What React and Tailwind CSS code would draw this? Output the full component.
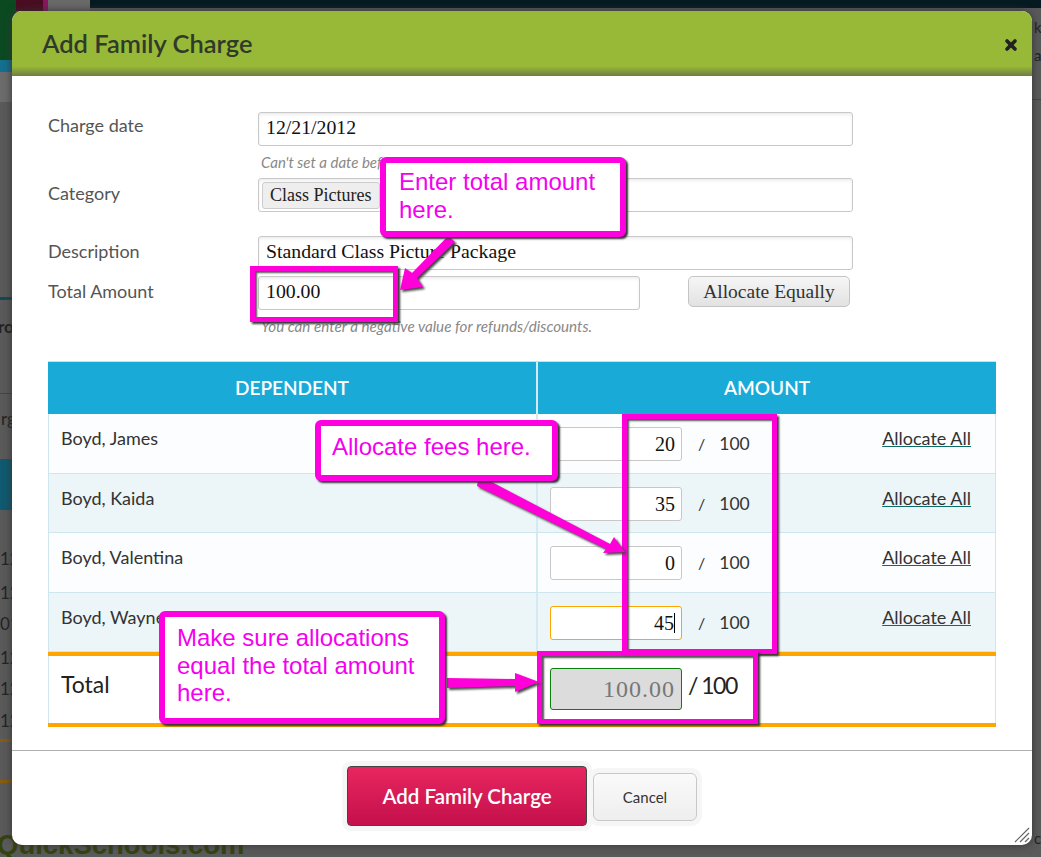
import { X } from 'lucide-react';

const ROWS = [
  { name: 'Boyd, James', value: '20', bg: 'bg-[#fbfdff]', h: 'h-[60px]' },
  { name: 'Boyd, Kaida', value: '35', bg: 'bg-[#ecf5f8]', h: 'h-[59px]' },
  { name: 'Boyd, Valentina', value: '0', bg: 'bg-[#fbfdff]', h: 'h-[60px]' },
  { name: 'Boyd, Wayne', value: '45', bg: 'bg-[#ecf5f8]', h: 'h-[59px]', focused: true },
];

const BG_NUMBERS = [
  { text: '12', top: 'top-[546px]' },
  { text: '12', top: 'top-[580px]' },
  { text: '01', top: 'top-[611px]' },
  { text: '12', top: 'top-[645px]' },
  { text: '12', top: 'top-[676px]' },
  { text: '12', top: 'top-[708px]' },
];

const sans = "font-['Lato','Open_Sans',sans-serif]";
const serif = "font-['Liberation_Serif',serif]";
const callout = "absolute border-[6px] border-[#ff00e0] rounded-[6px] bg-white shadow-[2px_2px_2px_#333] font-['Liberation_Sans',sans-serif] text-[#f500ee] text-[24px] leading-[27.5px]";
const box = 'absolute border-[5px] border-[#ff00d8] shadow-[2px_2px_2px_#333,inset_2px_2px_2px_#555]';

function Field({ children, className = '' }) {
  return (
    <div className={`h-[34px] border border-[#c8c8c8] rounded-[3px] bg-white shadow-[inset_0_2px_3px_#eee] flex items-center px-[7px] pb-[3px] text-[19.8px] text-[#111] ${serif} ${className}`}>
      {children}
    </div>
  );
}

function Label({ children }) {
  return <div className={`w-[210px] text-[18px] text-[#555] ${sans}`}>{children}</div>;
}

function BackdropPage() {
  return (
    <>
      <div className="absolute left-0 top-0 w-[16px] h-[60px] bg-[#0b4a20]" />
      <div className="absolute left-[16px] top-0 w-[27px] h-[11px] bg-[#4a0c20]" />
      <div className="absolute left-[43px] top-0 w-[5px] h-[11px] bg-[#8c1560]" />
      <div className="absolute left-[48px] top-0 w-[42px] h-[11px] bg-[#6a6a6a]" />
      <div className="absolute left-[90px] top-0 w-[951px] h-[8px] bg-[#061a22]" />
      <div className="absolute left-0 top-[60px] w-[12px] h-[12px] bg-[#13708f]" />
      <div className="absolute left-0 top-[72px] w-[12px] h-[30px] bg-[#6c6c6c]" />
      <div className="absolute left-0 top-[297px] w-[12px] h-[3px] bg-[#0f4a58]" />
      <div className="absolute left-0 top-[393px] w-[12px] h-px bg-[#444]" />
      <div className="absolute left-0 top-[459px] w-[12px] h-[51px] bg-[#0f5a70]" />
      <div className="absolute left-0 top-[739px] w-[12px] h-[3px] bg-[#8a5c10]" />
      <div className="absolute left-0 top-[780px] w-[12px] h-[3px] bg-[#8a5c10]" />
      <div className="absolute left-[1032px] top-[99px] w-[9px] h-px bg-[#444]" />
      <div className={`absolute left-[-2px] top-[314px] text-[17px] font-bold text-[#222] ${sans}`}>ro</div>
      <div className={`absolute left-[1px] top-[406px] text-[17px] text-[#222] ${sans}`}>rg</div>
      <div className={`absolute left-[1034px] top-[16px] text-[15px] text-[#222] ${sans}`}>ki</div>
      <div className={`absolute left-[1034px] top-[44px] text-[15px] text-[#222] ${sans}`}>a</div>
      <div className={`absolute left-[1034px] top-[827px] text-[15px] text-[#222] ${sans}`}>c</div>
      {BG_NUMBERS.map((n) => (
        <div key={n.top} className={`absolute left-0 ${n.top} text-[17px] text-[#222] ${sans}`}>{n.text}</div>
      ))}
      <div className="absolute left-[-3px] top-[824px] text-[27.5px] font-bold text-[#34430e] font-['Liberation_Sans',sans-serif]">QuickSchools.com</div>
    </>
  );
}

export default function App() {
  return (
    <div className="relative w-[1041px] h-[857px] overflow-hidden bg-[#5a5a5a]">
      <BackdropPage />

      {/* dialog */}
      <div className="absolute left-[12px] top-[11px] w-[1020px] h-[834px] rounded-[10px] bg-white overflow-hidden flex flex-col shadow-[0_0_8px_#333]">
        <div className="h-[65px] shrink-0 bg-[linear-gradient(#98b838_0,#98b838_85%,#6f7d45_100%)] flex items-center justify-between pl-[30px] pr-[13px]">
          <div className={`text-[25.5px] font-semibold text-[#2f3a2b] ${sans}`}>Add Family Charge</div>
          <X size={16} strokeWidth={5.5} className="text-[#222] mt-[2px]" />
        </div>

        <div className="flex-1 pl-[36px] pt-[36px]">
          <div className="flex">
            <div><Label>Charge date</Label></div>
            <Field className="w-[595px]">12/21/2012</Field>
          </div>
          <div className={`ml-[213px] mt-[5px] h-[21px] text-[15px] italic text-[#888] ${sans}`}>Can't set a date before</div>
          <div className="flex mt-[6px]">
            <div className="pt-[2px]"><Label>Category</Label></div>
            <Field className="w-[595px] !px-[3px] !pb-0">
              <span className="h-[27px] flex items-center px-[7px] border border-[#ccc] rounded-[3px] bg-[#eee] text-[18px] text-[#222]">Class Pictures</span>
            </Field>
          </div>
          <div className="flex mt-[24px]">
            <div className="pt-[2px]"><Label>Description</Label></div>
            <Field className="w-[595px]">Standard Class Picture Package</Field>
          </div>
          <div className="flex mt-[6px]">
            <div className="pt-[2px]"><Label>Total Amount</Label></div>
            <Field className="w-[382px]">100.00</Field>
            <button className={`ml-[48px] w-[162px] h-[31px] border border-[#c4c4c4] rounded-[5px] bg-[linear-gradient(#f6f6f6,#e2e2e2)] text-[19.5px] text-[#333] ${serif}`}>Allocate Equally</button>
          </div>
          <div className={`ml-[213px] mt-[6px] h-[20px] leading-[20px] text-[15.2px] italic text-[#888] ${sans}`}>You can enter a negative value for refunds/discounts.</div>

          {/* allocation table */}
          <div className={`mt-[25px] w-[948px] ${sans}`}>
            <div className="flex h-[53px] bg-[#1aaad8] border-t border-[#bfe3ef] text-white text-[19px] font-semibold">
              <div className="w-[488px] flex items-center justify-center">DEPENDENT</div>
              <div className="w-[2px] bg-[#d3eaf2]" />
              <div className="flex-1 flex items-center justify-center">AMOUNT</div>
            </div>
            {ROWS.map((row) => (
              <div key={row.name} className={`flex ${row.h} ${row.bg} border-l border-r border-b border-[#cfe6ef] text-[18px] text-[#333]`}>
                <div className="w-[487px] pl-[12px] pt-[11px]">{row.name}</div>
                <div className="flex-1 border-l-2 border-[#d3eaf2] pl-[12px] pt-[13px] flex items-start">
                  <div className={`w-[132px] h-[34px] rounded-[3px] border bg-white flex items-center justify-end pr-[6px] text-[20px] text-[#111] ${serif} ${row.focused ? 'border-[#ffa500]' : 'border-[#c8c8c8]'}`}>
                    {row.value}
                    {row.focused && <span className="w-px h-[20px] bg-black" />}
                  </div>
                  <span className="ml-[16px] mt-[5px] text-[16px]">/</span>
                  <span className="ml-[14px] mt-[4px] text-[17.5px]">100</span>
                  <a className="ml-auto mr-[24px] mt-[-2px] underline decoration-[#0b6b66]">Allocate All</a>
                </div>
              </div>
            ))}
            <div className="flex h-[75px] border-t-4 border-b-4 border-[#ffa500] bg-white">
              <div className="w-[488px] border-l border-[#cfe6ef] pl-[12px] pt-[11px] text-[23px] text-[#222]">Total</div>
              <div className="flex-1 pl-[14px] pt-[12px] flex items-start border-r border-[#cfe6ef]">
                <div className={`w-[132px] h-[42px] rounded-[3px] border border-[#0a800a] bg-[#dcdcdc] flex items-center justify-end pr-[6px] text-[24px] tracking-[1px] text-[#777] ${serif}`}>100.00</div>
                <span className="ml-[6px] text-[23px] tracking-[-1.5px] text-[#222]">/ 100</span>
              </div>
            </div>
          </div>
        </div>

        <div className="h-[95px] shrink-0 border-t border-[#b0b0b0] flex items-start justify-center pt-[15px] gap-[6px]">
          <button className={`w-[240px] h-[60px] rounded-[4px] border border-[#444] bg-[linear-gradient(#e8265f,#c4104c)] text-white text-[20.5px] font-semibold ${sans} shadow-[0_0_0_5px_#f6f6f6]`}>Add Family Charge</button>
          <button className={`mt-[7px] w-[104px] h-[48px] rounded-[6px] border border-[#c8c8c8] bg-[linear-gradient(#fafafa,#eee)] text-[15px] text-[#333] ${sans} shadow-[0_0_0_5px_#f6f6f6]`}>Cancel</button>
        </div>

        {/* resize grip */}
        <svg className="absolute right-[2px] bottom-[2px]" width="16" height="16" viewBox="0 0 16 16" stroke="#666" strokeWidth="1.2">
          <path d="M1 15 15 1M6 15 15 6M11 15 15 11" />
        </svg>
      </div>

      {/* annotations */}
      <div className={`${box} left-[250px] top-[266px] w-[148px] h-[56px]`} />
      <div className={`${box} left-[622px] top-[414px] w-[155px] h-[240px]`} />
      <div className={`${box} left-[537px] top-[651px] w-[221px] h-[73px]`} />

      <svg className="absolute left-0 top-0 pointer-events-none" width="1041" height="857" fill="#ff00d8" style={{ filter: 'drop-shadow(2px 2px 1px #444)' }}>
        <path d="M448 236 455 242 417 278 423 287 400 290 405 268 412 273Z" />
        <path d="M478 480 484 478 610 544 614 537 625 552 603 553 606 549 477 486Z" />
        <path d="M447 678 515 679 515 673 539 682 515 692 515 686 447 688Z" />
      </svg>

      <div className={`${callout} left-[380px] top-[157px] w-[246px] h-[80px] pl-[13px] pt-[5px]`}>Enter total amount here.</div>
      <div className={`${callout} left-[315px] top-[420px] w-[243px] h-[61px] pl-[11px] pt-[7px]`}>Allocate fees here.</div>
      <div className={`${callout} left-[159px] top-[611px] w-[286px] h-[113px] pl-[12px] pt-[7px]`}>Make sure allocations equal the total amount here.</div>
    </div>
  );
}
